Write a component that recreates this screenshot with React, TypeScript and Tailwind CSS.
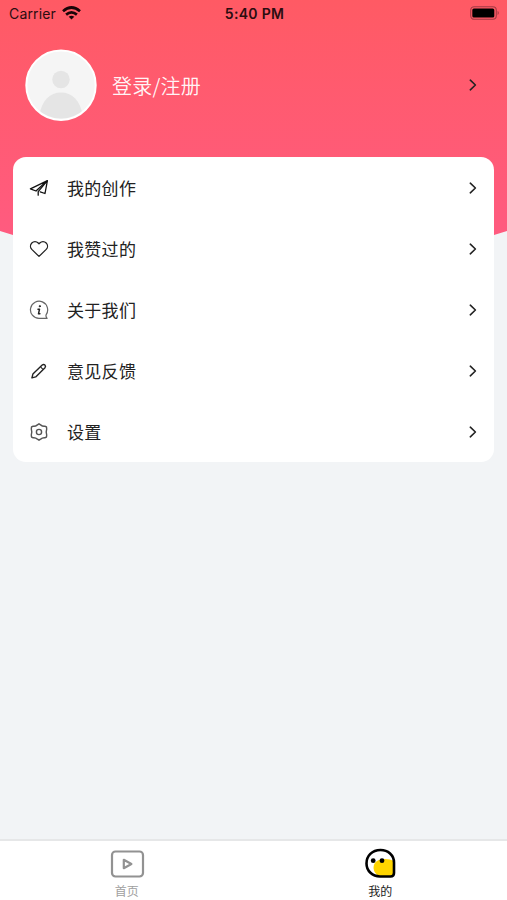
import type { ReactNode } from 'react';

function Chevron() {
    return (
        <svg className="w-2 h-3 shrink-0" viewBox="0 0 8 12" fill="none" stroke="#222" strokeWidth="1.6" strokeLinecap="round" strokeLinejoin="round">
            <path d="M1.3 1.2 6.4 6 1.3 10.8" />
        </svg>
    );
}

function Icon({ children }: { children: ReactNode }) {
    return (
        <svg className="w-5 h-5 shrink-0" viewBox="0 0 20 20" fill="none" stroke="#333" strokeWidth="1.3" strokeLinecap="round" strokeLinejoin="round">
            {children}
        </svg>
    );
}

const menu = [
    {
        label: '我的创作',
        icon: (
            <Icon>
                <path d="M18.4 2.6 1.4 10.8 7 13 18.4 2.6 16 15.5 11.2 13.8" stroke="#111" />
                <path d="M18 3.2 9.2 13.6V17.2" stroke="#111" />
            </Icon>
        ),
    },
    {
        label: '我赞过的',
        icon: (
            <Icon>
                <path d="M10 17.4 2.8 10.4A4.6 4.6 0 0 1 2.8 4 4.5 4.5 0 0 1 9.2 4L10 4.8 10.8 4A4.5 4.5 0 0 1 17.2 4 4.6 4.6 0 0 1 17.2 10.4Z" stroke="#222" />
            </Icon>
        ),
    },
    {
        label: '关于我们',
        icon: (
            <Icon>
                <path d="M18.1 18.4H10A8.6 8.6 0 1 1 17.2 14.6Q16.4 16.4 18.1 18.4Z" stroke="#666" strokeWidth="1.2" />
                <circle cx="10.8" cy="6.2" r=".7" fill="#222" stroke="#222" strokeWidth=".7" />
                <path d="M9 9.2H10.5L9.5 13.8H10.9" stroke="#222" strokeWidth="1.5" />
            </Icon>
        ),
    },
    {
        label: '意见反馈',
        icon: (
            <Icon>
                <path d="M2.9 16.9 3.9 13.1 13.2 4Q14.7 2.9 15.9 4T16 6.7L6.7 15.9Z" stroke="#222" strokeWidth="1.4" />
                <path d="M12 6.4 13.5 7.9" stroke="#222" strokeWidth="1.1" />
            </Icon>
        ),
    },
    {
        label: '设置',
        icon: (
            <Icon>
                <path d="M8.4 2.9 10 1.8 11.6 2.9Q13.5 4.5 15.8 4.2L17.5 5 17.7 7Q16.7 10 17.7 13L17.5 15 15.8 15.8Q13.5 15.5 11.6 17.1L10 18.2 8.4 17.1Q6.5 15.5 4.2 15.8L2.5 15 2.3 13Q3.3 10 2.3 7L2.5 5 4.2 4.2Q6.5 4.5 8.4 2.9Z" stroke="#555" strokeWidth="1.4" />
                <circle cx="10" cy="10" r="2.6" stroke="#555" strokeWidth="1.4" />
            </Icon>
        ),
    },
];

function StatusBar() {
    return (
        <div className="grid grid-cols-3 items-center h-7 pl-[9px] pr-[7px] text-[14px] leading-none text-[#2b0d10] font-['Inter',sans-serif]">
            <div className="flex items-center gap-[6px]">
                <span className="tracking-[0.15px]">Carrier</span>
                <svg className="relative -top-px w-[19px] h-[14px]" viewBox="0 0 19 14" fill="none" stroke="#1a0508" strokeWidth="2.7">
                    <path d="M1 5.2Q9.5-2.2 18 5.2" />
                    <path d="M4.1 8.6Q9.5 4.1 14.9 8.6" />
                    <path d="M6.7 10.7Q9.5 8.6 12.3 10.7L9.5 13.6Z" fill="#1a0508" stroke="none" />
                </svg>
            </div>
            <span className="text-center font-semibold text-[14px] tracking-[0.3px]">5:40 PM</span>
            <svg className="relative -top-px justify-self-end w-[30px] h-[14px]" viewBox="0 0 30 14">
                <rect x=".7" y=".7" width="25.6" height="12.6" rx="3.5" fill="none" stroke="#a43a44" strokeWidth="1.1" />
                <rect x="2.3" y="2.4" width="22" height="9.2" rx="1.6" fill="#000" />
                <path d="M27.6 4.8Q30 7 27.6 9.2Z" fill="#a43a44" />
            </svg>
        </div>
    );
}

export default function App() {
    return (
        <div className="flex flex-col w-full h-[900px] bg-[#f2f4f6] text-[#222] font-['Noto_Sans_CJK_SC',sans-serif] overflow-hidden">

            {/* Header */}
            <header className="h-[240px] shrink-0 bg-linear-to-b from-[#ff5a64] to-[#ff5b80] [clip-path:polygon(0_0,100%_0,100%_231px,494px_235px,13px_235px,0_231px)]">
                <StatusBar />
                <div className="flex items-center mt-[21px] pl-[25px] pr-[30px]">
                    <svg className="w-[72px] h-[72px]" viewBox="0 0 72 72">
                        <defs>
                            <clipPath id="avatar">
                                <circle cx="36" cy="36" r="33.5" />
                            </clipPath>
                        </defs>
                        <circle cx="36" cy="36.2" r="34.7" fill="#f5f5f5" stroke="#fff" strokeWidth="2" />
                        <g fill="#e5e5e5" clipPath="url(#avatar)">
                            <circle cx="36" cy="30.5" r="8.7" />
                            <path d="M14 67C17 51 25 43.5 36 43.5S55 51 58 67L50 72H22Z" />
                        </g>
                    </svg>
                    <span className="ml-[15px] mt-0.5 grow text-[20px] leading-7 tracking-[0.2px] font-[350] text-white/95">登录/注册</span>
                    <Chevron />
                </div>
            </header>

            {/* Menu card */}
            <main className="relative -mt-[83px] mx-[13px] grow">
                <ul className="bg-white rounded-[13px]">
                    {menu.map((item) => (
                        <li key={item.label} className="flex items-center h-[61px] pl-4 pr-[17px]">
                            {item.icon}
                            <span className="ml-[18px] grow text-[17px] leading-6 tracking-[0.3px]">{item.label}</span>
                            <Chevron />
                        </li>
                    ))}
                </ul>
            </main>

            {/* Tab bar */}
            <nav className="grid grid-cols-2 h-[61px] shrink-0 bg-white border-t-2 border-[#e6e7e8] text-[12px] leading-4">
                <div className="flex flex-col items-center gap-0.5 pt-1.5 text-[#a0a0a0]">
                    <svg className="w-9 h-[34px]" viewBox="0 0 36 34" fill="none" stroke="#929292" strokeWidth="2.2" strokeLinejoin="round">
                        <rect x="3" y="4.5" width="31" height="25" rx="3.5" />
                        <path d="M14.8 12.8V21.2L22.4 17Z" />
                    </svg>
                    <span>首页</span>
                </div>
                <div className="flex flex-col items-center gap-0.5 pt-1.5">
                    <svg className="w-9 h-[34px]" viewBox="0 0 36 34">
                        <path d="M32 26V15.5C32 8 26 3 18.5 3 10 3 4.5 9 4.5 16.5S10.5 29.5 18 29.5H28.5Q32 29.5 32 26Z" fill="#fff" />
                        <path d="M32 26V14Q28 12 23 12C16 12 11.5 15 11.5 21Q12 27 18 29.5H28.5Q32 29.5 32 26Z" fill="#ffd500" />
                        <path d="M32 26V15.5C32 8 26 3 18.5 3 10 3 4.5 9 4.5 16.5S10.5 29.5 18 29.5H28.5Q32 29.5 32 26Z" fill="none" stroke="#000" strokeWidth="2.6" />
                        <circle cx="11.2" cy="13.7" r="2.4" fill="#000" />
                        <circle cx="20" cy="13.7" r="2.4" fill="#000" />
                    </svg>
                    <span>我的</span>
                </div>
            </nav>

        </div>
    );
}
